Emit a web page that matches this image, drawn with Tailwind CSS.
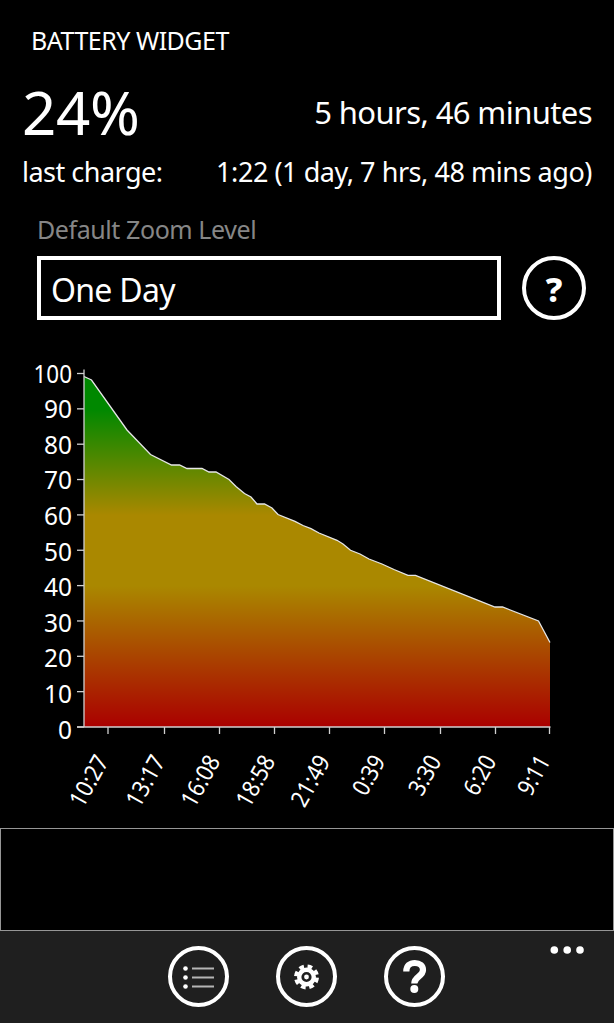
<!DOCTYPE html>
<html lang="en">
<head>
    <meta charset="UTF-8" />
    <title>Battery Widget</title>
    <script src="https://cdn.jsdelivr.net/npm/@tailwindcss/browser@4"></script>
</head>
<body class="w-[614px] h-[1023px] overflow-hidden bg-black text-white font-['Noto_Sans',sans-serif] flex flex-col whitespace-nowrap">
    <h1 class="h-10 mt-5 pl-[31px] leading-10 text-[25px] tracking-[-0.5px]">BATTERY WIDGET</h1>

    <!-- Status -->
    <div class="h-[70px] mt-4 pl-[22px] pr-[22px] flex items-center justify-between">
        <span class="text-[60px] leading-[70px] tracking-[-0.3px] pt-0.5">24%</span>
        <span class="text-[31px] leading-[70px] tracking-[-0.6px] pt-0.5">5 hours, 46 minutes</span>
    </div>
    <div class="h-[50px] pl-[22px] pr-[22px] pt-px flex items-center justify-between text-[27px] leading-[50px]">
        <span class="tracking-[-0.5px]">last charge:</span>
        <span class="tracking-[-0.45px]">1:22 (1 day, 7 hrs, 48 mins ago)</span>
    </div>

    <!-- Zoom level -->
    <label class="h-[50px] mt-2 pl-[37px] text-[25px] leading-[51px] tracking-[-0.42px] text-[#868686]">Default Zoom Level</label>
    <div class="h-16 mt-0.5 pl-[37px] flex items-center gap-[21px]">
        <div class="w-[464px] h-16 border-4 border-white pl-[10px] text-[32px] leading-[60px] tracking-[-0.7px]">One Day</div>
        <button class="w-16 h-16 rounded-full border-4 border-white text-[34px] leading-[58px] font-extrabold text-center">?</button>
    </div>

    <!-- Chart -->
    <svg class="block shrink-0" width="614" height="508" viewBox="0 320 614 508">
        <defs>
            <linearGradient id="level" gradientUnits="userSpaceOnUse" x1="0" y1="374" x2="0" y2="727">
                <stop offset="0" stop-color="#008800" />
                <stop offset="0.1" stop-color="#008800" />
                <stop offset="0.4" stop-color="#aa8800" />
                <stop offset="0.6" stop-color="#aa8800" />
                <stop offset="1" stop-color="#aa0000" />
            </linearGradient>
        </defs>
        <path id="area" fill="url(#level)" />
        <path id="line" fill="none" stroke="#e6e6e6" stroke-width="1.3" />
        <path d="M84 369.5V727.5M77 727H550.5" fill="none" stroke="#d0d0d0" stroke-width="1.3" />
        <g id="ticks" stroke="#d0d0d0" stroke-width="1.3"></g>
        <g id="labels" fill="#fff" font-size="24.5"></g>
    </svg>

    <div class="h-[103px] shrink-0 border border-[#969696]"></div>

    <!-- App bar -->
    <div class="relative h-[92px] shrink-0 bg-[#1f1f1f] flex justify-center gap-[47px] pt-[15px] pr-px">
        <svg class="w-[61px] h-[61px]" viewBox="0 0 61 61" fill="none">
            <circle cx="30.5" cy="30.5" r="28.5" stroke="#fff" stroke-width="4" />
            <g fill="#fff">
                <circle cx="17.5" cy="22.5" r="2.3" />
                <circle cx="17.5" cy="31.5" r="2.3" />
                <circle cx="17.5" cy="40.5" r="2.3" />
            </g>
            <path d="M24 22.5H46M24 31.5H46M24 40.5H46" stroke="#b5b5b5" stroke-width="2" />
        </svg>
        <svg class="w-[61px] h-[61px]" viewBox="0 0 61 61" fill="none">
            <circle cx="30.5" cy="30.5" r="28.5" stroke="#fff" stroke-width="4" />
            <g transform="translate(30.5 31)" stroke="#fff">
                <circle r="7.3" stroke-width="4.4" />
                <circle r="10.6" stroke-width="3.8" stroke-dasharray="4.7 3.625" transform="rotate(4)" />
                <circle r="2.4" fill="#fff" stroke="none" />
            </g>
        </svg>
        <svg class="w-[61px] h-[61px]" viewBox="0 0 61 61" fill="none">
            <circle cx="30.5" cy="30.5" r="28.5" stroke="#fff" stroke-width="4" />
            <path d="M22.3 25.5C22.3 19.8 25.8 17 30.8 17C35.8 17 39 19.8 39 24C39 30.5 30.3 30.5 30.3 37.5" stroke="#fff" stroke-width="6.2" />
            <circle cx="30.3" cy="43" r="4" fill="#fff" />
        </svg>
        <svg class="absolute left-[550px] top-[15px] w-[34px] h-2" viewBox="0 0 34 8" fill="#fff">
            <circle cx="4.3" cy="4" r="3.8" />
            <circle cx="17.2" cy="4" r="3.8" />
            <circle cx="30" cy="4" r="3.8" />
        </svg>
    </div>

    <script>
    const points = [
        [84, 376.5], [91.5, 380], [127, 430], [150.5, 454.5], [171.5, 465], [179.5, 465], [187, 468.5],
        [202, 468.5], [209, 472], [216, 472], [229, 479.5], [236, 486.5], [244.5, 493.5], [251, 497],
        [257, 504], [264.5, 504], [272, 508], [278, 514.5], [295, 521.3], [303, 525.5], [311, 528.7],
        [319, 533], [337, 540.3], [343, 544], [350.5, 550.3], [360, 554], [369, 559], [382, 564],
        [394, 569.5], [408, 575.3], [415.5, 575.3], [495, 607], [502.5, 607], [538.5, 621], [550, 642.5]
    ];
    const line = "M" + points.map(p => p.join(" ")).join("L");
    document.getElementById("line").setAttribute("d", line);
    document.getElementById("area").setAttribute("d", line + "V727H84Z");

    const times = [
        ["10:27", 108], ["13:17", 164.5], ["16:08", 219.5], ["18:58", 274.5], ["21:49", 329.5],
        ["0:39", 384.5], ["3:30", 440.5], ["6:20", 495.5], ["9:11", 549.5]
    ];
    const labelWidths = { 1: 14, 2: 28, 3: 38.5 };
    let ticks = "";
    let labels = "";

    // y axis
    for (let v = 0; v <= 100; v += 10) {
        const y = 727 - v * 3.535;
        const width = labelWidths[String(v).length];
        ticks += `<path d="M77 ${y}H84" />`;
        labels += `<text x="${72 - width}" y="${738.5 - v * 3.56}" font-size="25" textLength="${width}" lengthAdjust="spacingAndGlyphs">${v}</text>`;
    }

    // x axis
    times.forEach(([t, x]) => {
        const width = t.length === 5 ? 54.5 : 41.5;
        ticks += `<path d="M${x} 727V734" />`;
        labels += `<text transform="translate(${x + 1.5} 761) rotate(-61)" x="${-width}" y="0" font-size="24" textLength="${width}" lengthAdjust="spacingAndGlyphs">${t}</text>`;
    });

    document.getElementById("ticks").innerHTML = ticks;
    document.getElementById("labels").innerHTML = labels;
    </script>
</body>
</html>
